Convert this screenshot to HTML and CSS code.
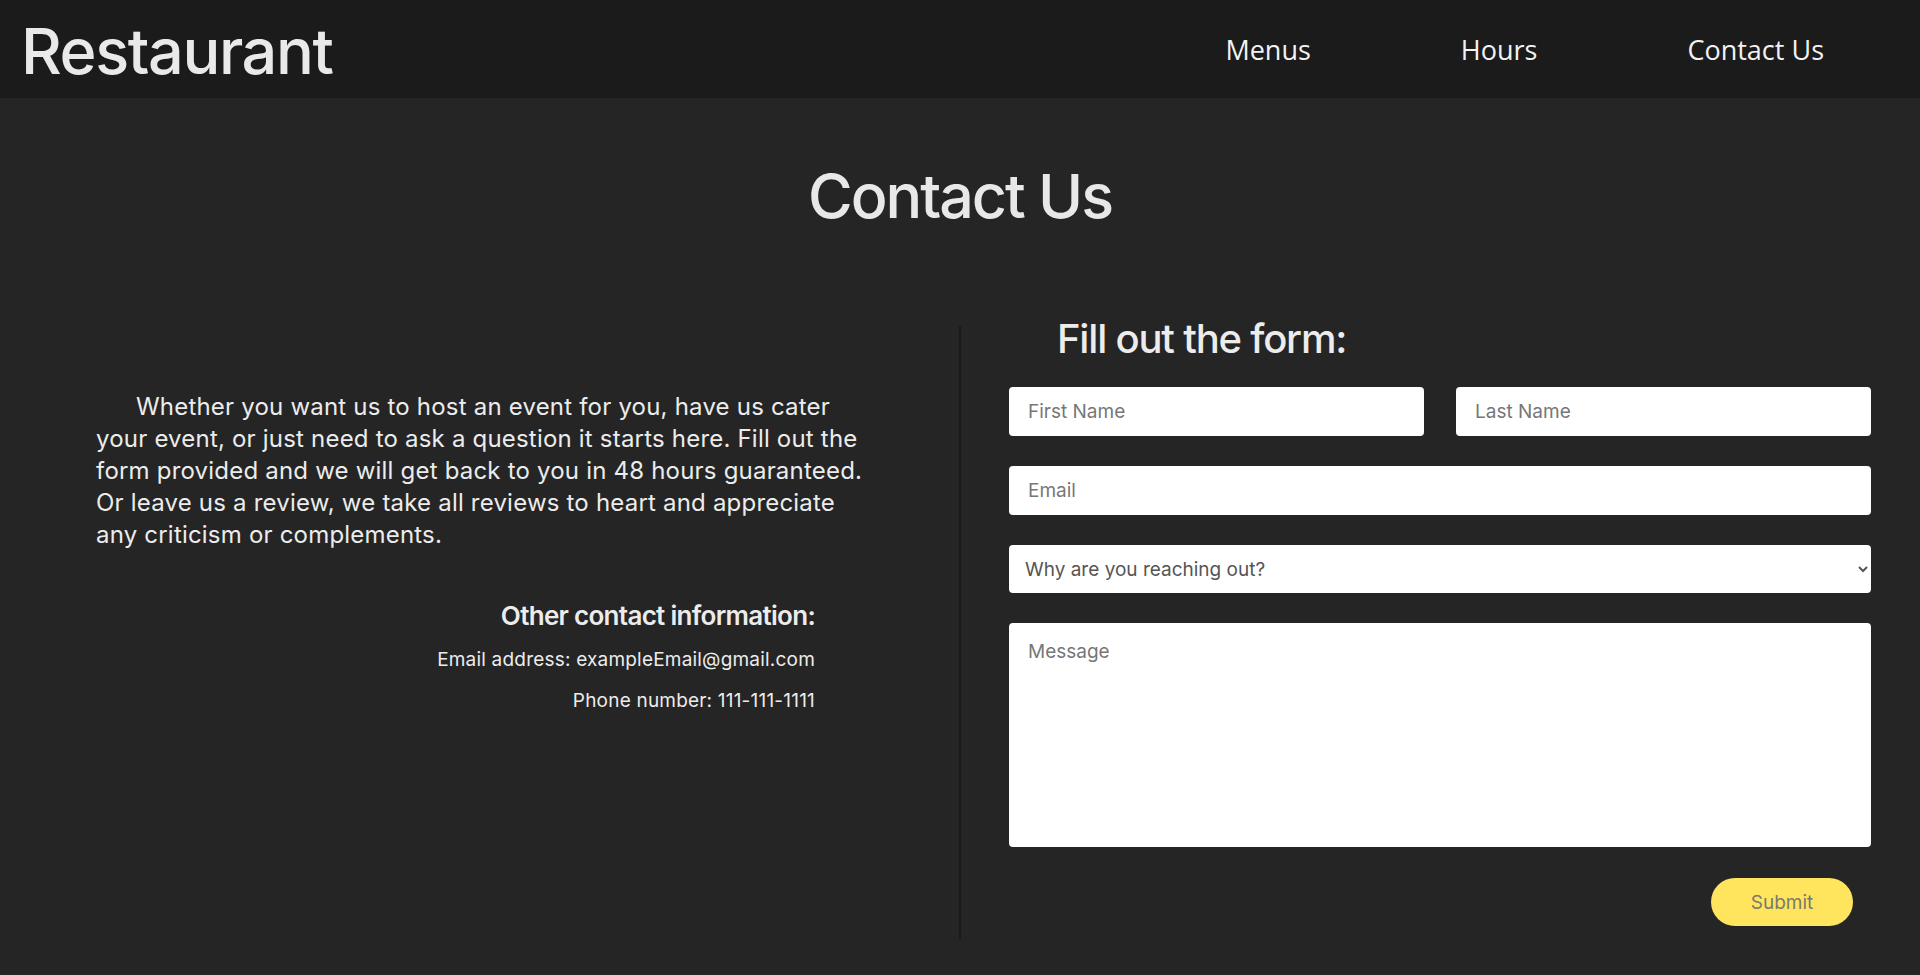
FILE: index.html
```html
<!DOCTYPE html>
<html lang="en">
<head>
<meta charset="utf-8">
<title>Restaurant - Contact Us</title>
<link rel="stylesheet" href="styles.css">
</head>
<body>
<header class="topbar">
  <div class="logo">Restaurant</div>
  <nav class="nav">
    <a class="nav-link" href="#">Menus</a>
    <a class="nav-link" href="#">Hours</a>
    <a class="nav-link" href="#">Contact Us</a>
  </nav>
</header>
<main class="page">
  <h1 class="page-title">Contact Us</h1>
  <section class="contact">
    <div class="info">
      <div class="info-inner">
        <p class="intro">Whether you want us to host an event for you, have us cater your event, or just need to ask a question it starts here. Fill out the form provided and we will get back to you in 48 hours guaranteed. Or leave us a review, we take all reviews to heart and appreciate any criticism or complements.</p>
        <div class="other">
          <h3 class="other-title">Other contact information:</h3>
          <p class="other-line">Email address: exampleEmail@gmail.com</p>
          <p class="other-line">Phone number: 111-111-1111</p>
        </div>
      </div>
    </div>
    <div class="divider"></div>
    <div class="form-col">
      <h2 class="form-title">Fill out the form:</h2>
      <form class="form">
        <div class="row">
          <input class="field" type="text" placeholder="First Name">
          <input class="field" type="text" placeholder="Last Name">
        </div>
        <input class="field" type="email" placeholder="Email">
        <select class="field select">
          <option selected disabled>Why are you reaching out?</option>
          <option>Host an event</option>
          <option>Catering</option>
          <option>Question</option>
          <option>Review</option>
        </select>
        <textarea class="field message" placeholder="Message"></textarea>
        <div class="actions">
          <button class="submit" type="button">Submit</button>
        </div>
      </form>
    </div>
  </section>
</main>
</body>
</html>
```

FILE: styles.css
```css
* { box-sizing: border-box; }

body {
  margin: 0;
  background: #252525;
  color: #e8e8e8;
  font-family: Inter, "Noto Sans", sans-serif;
  min-height: 975px;
}

.topbar {
  height: 98px;
  background: #1b1b1b;
  display: flex;
  align-items: center;
  justify-content: space-between;
  padding: 0 96px 0 21px;
}

.logo {
  font-family: Inter, sans-serif;
  font-weight: 500;
  font-size: 63px;
  letter-spacing: -1.4px;
  color: #e9e9e9;
  line-height: 1;
  padding-top: 4px;
}

.nav {
  display: flex;
  gap: 150px;
}

.nav-link {
  font-family: "Open Sans", sans-serif;
  font-size: 27px;
  font-weight: 400;
  color: #f2f2f2;
  text-decoration: none;
}

.page-title {
  margin: 68px 0 0;
  text-align: center;
  font-weight: 500;
  font-size: 61px;
  line-height: 1;
  letter-spacing: -2px;
  color: #e8e8e8;
}

.contact {
  display: grid;
  grid-template-columns: 959px 2px 1fr;
  margin-top: 82px;
}

.info {
  padding: 82px 0 0 96px;
}

.info-inner {
  width: 775px;
}

.intro {
  margin: 0;
  font-size: 24px;
  line-height: 32px;
  letter-spacing: 0.2px;
  text-indent: 40px;
  color: #ececec;
}

.other {
  margin-top: 49px;
  padding-right: 56px;
  text-align: right;
}

.other-title {
  margin: 0 0 16px;
  font-size: 26px;
  font-weight: 600;
  letter-spacing: -0.7px;
  line-height: 32px;
  color: #ececec;
}

.other-line {
  margin: 0 0 18px;
  font-size: 19px;
  line-height: 23px;
  letter-spacing: 0.2px;
  color: #ececec;
}

.divider {
  background: #1a1a1a;
  margin-top: 17px;
  height: 613px;
}

.form-col {
  padding: 10px 49px 0 48px;
}

.form-title {
  margin: 0 0 28px 48px;
  font-size: 40px;
  font-weight: 500;
  line-height: 1;
  letter-spacing: -1.2px;
  color: #ececec;
}

.form {
  display: flex;
  flex-direction: column;
  gap: 30px;
}

.row {
  display: grid;
  grid-template-columns: 1fr 1fr;
  gap: 32px;
}

.field {
  display: block;
  width: 100%;
  height: 49px;
  border: none;
  border-radius: 4px;
  background: #ffffff;
  padding: 0 19px;
  font-family: Inter, sans-serif;
  font-size: 19px;
  color: #333;
}

.field::placeholder {
  color: #777777;
}

.select {
  height: 48px;
  padding: 0 12px;
  color: #555555;
  font-size: 19px;
}

.message {
  height: 224px;
  padding: 17px 19px;
  resize: none;
}

.actions {
  display: flex;
  justify-content: flex-end;
  padding-right: 18px;
  padding-top: 1px;
}

.submit {
  width: 142px;
  height: 48px;
  border: none;
  border-radius: 24px;
  background: #ffe55e;
  color: #7a7a70;
  font-family: Inter, sans-serif;
  font-size: 19px;
}
```
